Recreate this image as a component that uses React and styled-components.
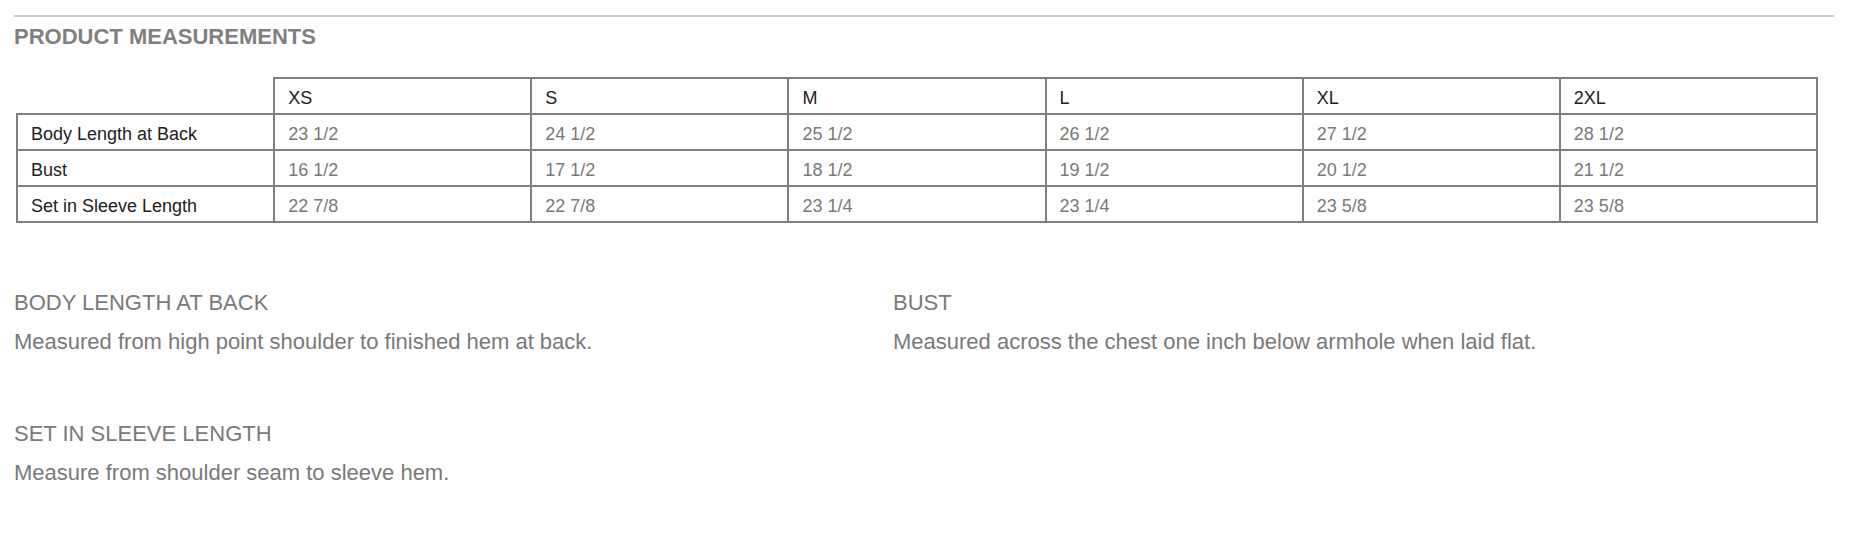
import React from "react";
import styled, { createGlobalStyle } from "styled-components";

const Global = createGlobalStyle`
  html, body { margin: 0; padding: 0; background: #fff; }
  body { font-family: "Liberation Sans", Arial, Helvetica, sans-serif; }
`;

const Page = styled.div`
  padding: 15px 16px 40px 14px;
`;

const Divider = styled.hr`
  margin: 0;
  border: none;
  height: 2px;
  background: #cdcdcd;
`;

const Title = styled.h2`
  margin: 7px 0 0;
  font-size: 22px;
  line-height: 25px;
  font-weight: 700;
  color: #808080;
  letter-spacing: 0;
`;

const Table = styled.table`
  margin: 28px 0 0 2px;
  width: 1802px;
  table-layout: fixed;
  border-collapse: collapse;
  font-size: 18px;
  line-height: 20px;
`;

const Cell = styled.td`
  border: 2px solid #808080;
  padding: 9px 13px 5px;
  text-align: left;
  font-weight: 400;
  color: ${(p) => (p.$value ? "#7a7a7a" : "#222")};
`;

const CornerCell = styled.th`
  border: none;
  padding: 0;
`;

const HeadCell = styled.th`
  border: 2px solid #808080;
  padding: 9px 13px 5px;
  text-align: left;
  font-weight: 400;
  color: #222;
`;

const Notes = styled.div`
  margin-top: 67px;
  display: grid;
  grid-template-columns: 879px 1fr;
  row-gap: 67px;
`;

const Note = styled.div`
  display: flex;
  flex-direction: column;
  gap: 14px;
`;

const NoteTitle = styled.h3`
  margin: 0;
  font-size: 22px;
  line-height: 25px;
  font-weight: 400;
  color: #7a7a7a;
  text-transform: uppercase;
`;

const NoteText = styled.p`
  margin: 0;
  font-size: 22px;
  line-height: 25px;
  color: #7a7a7a;
`;

const sizes = ["XS", "S", "M", "L", "XL", "2XL"];
const rows = [
  ["Body Length at Back", ["23 1/2", "24 1/2", "25 1/2", "26 1/2", "27 1/2", "28 1/2"]],
  ["Bust", ["16 1/2", "17 1/2", "18 1/2", "19 1/2", "20 1/2", "21 1/2"]],
  ["Set in Sleeve Length", ["22 7/8", "22 7/8", "23 1/4", "23 1/4", "23 5/8", "23 5/8"]],
];

const notes = [
  ["Body Length at Back", "Measured from high point shoulder to finished hem at back."],
  ["Bust", "Measured across the chest one inch below armhole when laid flat."],
  ["Set in Sleeve Length", "Measure from shoulder seam to sleeve hem."],
];

export default function App() {
  return (
    <>
      <Global />
      <Page>
        <Divider />
        <Title>PRODUCT MEASUREMENTS</Title>
        <Table>
          <thead>
            <tr>
              <CornerCell />
              {sizes.map((s) => (
                <HeadCell key={s}>{s}</HeadCell>
              ))}
            </tr>
          </thead>
          <tbody>
            {rows.map(([label, vals]) => (
              <tr key={label}>
                <Cell>{label}</Cell>
                {vals.map((v, i) => (
                  <Cell key={i} $value>
                    {v}
                  </Cell>
                ))}
              </tr>
            ))}
          </tbody>
        </Table>
        <Notes>
          {notes.map(([t, d]) => (
            <Note key={t}>
              <NoteTitle>{t}</NoteTitle>
              <NoteText>{d}</NoteText>
            </Note>
          ))}
        </Notes>
      </Page>
    </>
  );
}
